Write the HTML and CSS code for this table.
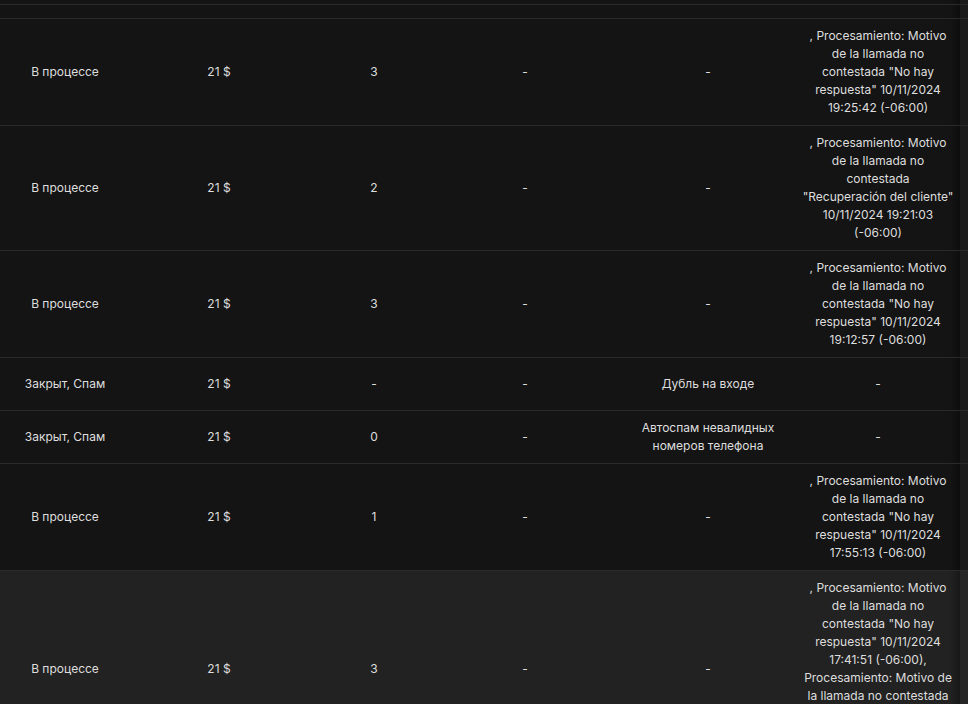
FILE: index.html
```html
<!DOCTYPE html>
<html lang="ru">
<head>
<meta charset="utf-8">
<title>Leads</title>
<link rel="stylesheet" href="styles.css">
</head>
<body>
<table class="grid">
  <colgroup>
    <col class="c1"><col class="c2"><col class="c3"><col class="c4"><col class="c5"><col class="c6"><col class="c7">
  </colgroup>
  <tbody>
    <tr class="stub"><td colspan="6"><div class="stub-a"></div></td><td class="edge"></td></tr>
    <tr class="stub"><td colspan="6"><div class="stub-b"></div></td><td class="edge"></td></tr>

    <tr>
      <td><div class="cell">В процессе</div></td>
      <td><div class="cell">21 $</div></td>
      <td><div class="cell">3</div></td>
      <td><div class="cell">-</div></td>
      <td><div class="cell">-</div></td>
      <td><div class="cell"><span>, Procesamiento: Motivo</span><span>de la llamada no</span><span>contestada "No hay</span><span>respuesta" 10/11/2024</span><span>19:25:42 (-06:00)</span></div></td>
      <td class="edge"></td>
    </tr>

    <tr>
      <td><div class="cell">В процессе</div></td>
      <td><div class="cell">21 $</div></td>
      <td><div class="cell">2</div></td>
      <td><div class="cell">-</div></td>
      <td><div class="cell">-</div></td>
      <td><div class="cell"><span>, Procesamiento: Motivo</span><span>de la llamada no</span><span>contestada</span><span>"Recuperación del cliente"</span><span>10/11/2024 19:21:03</span><span>(-06:00)</span></div></td>
      <td class="edge"></td>
    </tr>

    <tr>
      <td><div class="cell">В процессе</div></td>
      <td><div class="cell">21 $</div></td>
      <td><div class="cell">3</div></td>
      <td><div class="cell">-</div></td>
      <td><div class="cell">-</div></td>
      <td><div class="cell"><span>, Procesamiento: Motivo</span><span>de la llamada no</span><span>contestada "No hay</span><span>respuesta" 10/11/2024</span><span>19:12:57 (-06:00)</span></div></td>
      <td class="edge"></td>
    </tr>

    <tr>
      <td><div class="cell">Закрыт, Спам</div></td>
      <td><div class="cell">21 $</div></td>
      <td><div class="cell">-</div></td>
      <td><div class="cell">-</div></td>
      <td><div class="cell">Дубль на входе</div></td>
      <td><div class="cell">-</div></td>
      <td class="edge"></td>
    </tr>

    <tr>
      <td><div class="cell">Закрыт, Спам</div></td>
      <td><div class="cell">21 $</div></td>
      <td><div class="cell">0</div></td>
      <td><div class="cell">-</div></td>
      <td><div class="cell"><span>Автоспам невалидных</span><span>номеров телефона</span></div></td>
      <td><div class="cell">-</div></td>
      <td class="edge"></td>
    </tr>

    <tr>
      <td><div class="cell">В процессе</div></td>
      <td><div class="cell">21 $</div></td>
      <td><div class="cell">1</div></td>
      <td><div class="cell">-</div></td>
      <td><div class="cell">-</div></td>
      <td><div class="cell"><span>, Procesamiento: Motivo</span><span>de la llamada no</span><span>contestada "No hay</span><span>respuesta" 10/11/2024</span><span>17:55:13 (-06:00)</span></div></td>
      <td class="edge"></td>
    </tr>

    <tr class="hover">
      <td><div class="cell">В процессе</div></td>
      <td><div class="cell">21 $</div></td>
      <td><div class="cell">3</div></td>
      <td><div class="cell">-</div></td>
      <td><div class="cell">-</div></td>
      <td><div class="cell"><span>, Procesamiento: Motivo</span><span>de la llamada no</span><span>contestada "No hay</span><span>respuesta" 10/11/2024</span><span>17:41:51 (-06:00),</span><span>Procesamiento: Motivo de</span><span>la llamada no contestada</span><span>"No hay respuesta"</span><span>10/11/2024 17:37:12</span><span>(-06:00)</span></div></td>
      <td class="edge"></td>
    </tr>
  </tbody>
</table>
</body>
</html>
```
FILE: styles.css
```css
html, body {
  margin: 0;
  padding: 0;
  background: #141414;
  overflow: hidden;
}
body {
  font-family: Inter, "Noto Sans", sans-serif;
  font-size: 12px;
  line-height: 18px;
  color: #dedede;
}
.grid {
  width: 968px;
  table-layout: fixed;
  border-collapse: separate;
  border-spacing: 0;
}
.c1 { width: 130px; }
.c2 { width: 178px; }
.c3 { width: 132px; }
.c4 { width: 170px; }
.c5 { width: 196px; }
.c6 { width: 144px; }
.c7 { width: 18px; }

.grid td {
  padding: 8px 0;
  border-bottom: 1px solid #2a2a2a;
  vertical-align: middle;
  text-align: center;
}
.grid tr.stub td { padding: 0; }
.stub-a { height: 4px; }
.stub-b { height: 13px; }

.cell {
  min-height: 36px;
  display: flex;
  flex-direction: column;
  align-items: center;
  justify-content: center;
  white-space: nowrap;
}
.cell span { display: block; }

.hover td { background: #222222; }

.grid td.edge {
  padding: 0;
  background: linear-gradient(90deg, rgba(0,0,0,0) 0, rgba(0,0,0,0.35) 10px, #1b1b1b 10px, #1b1b1b 100%);
}
.hover td.edge {
  background: linear-gradient(90deg, rgba(0,0,0,0) 0, rgba(0,0,0,0.3) 10px, #262626 10px, #262626 100%), #222222;
}
```
